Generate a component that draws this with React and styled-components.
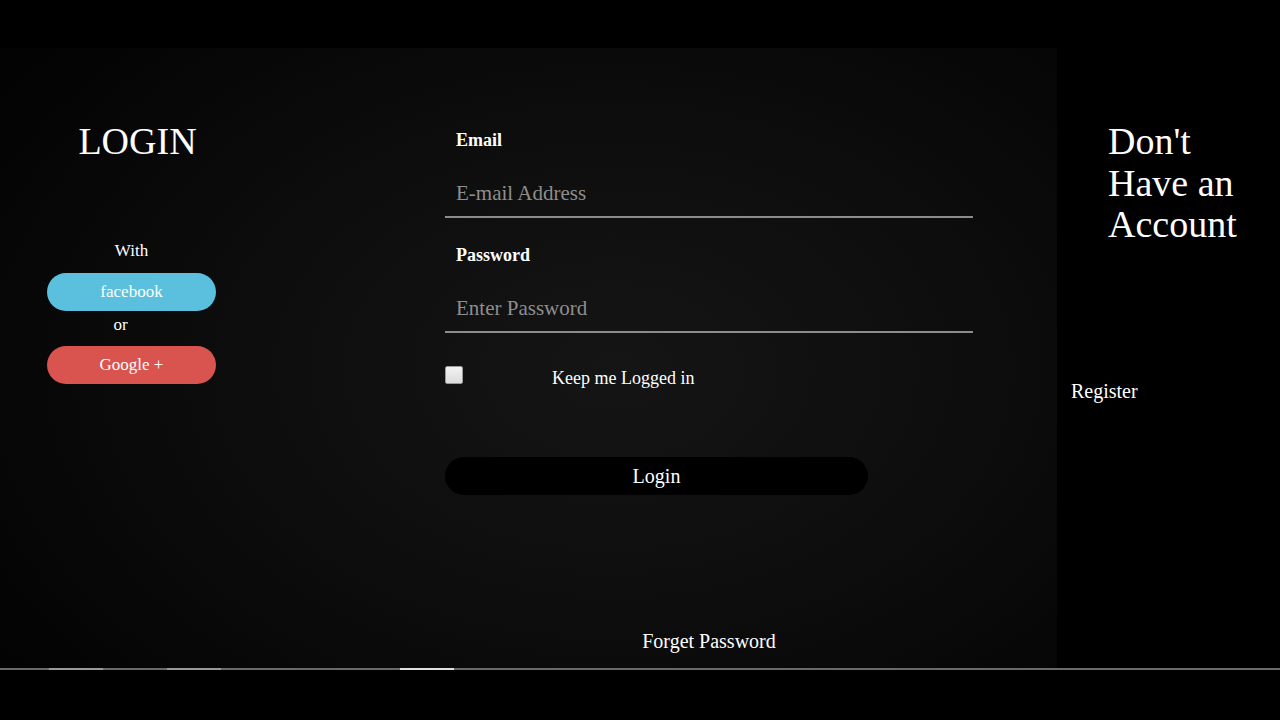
import styled, { createGlobalStyle } from "styled-components"

const GlobalStyle = createGlobalStyle`
  html, body {
    margin: 0;
    padding: 0;
    background: #000;
    font-family: "Liberation Serif", "Times New Roman", serif;
    color: #fff;
  }
  * { box-sizing: border-box; }
`

const Page = styled.div`
  width: 1280px;
  height: 720px;
  background: #000;
  display: flex;
  flex-direction: column;
  overflow: hidden;
`

const Main = styled.div`
  margin-top: 48px;
  height: 620px;
  display: flex;
`

const LoginPanel = styled.div`
  width: 1057px;
  display: flex;
  background: radial-gradient(ellipse 70% 80% at 58% 52%, #151515 0%, #0d0d0d 50%, #060606 85%, #030303 100%);
`

const Sidebar = styled.div`
  width: 263px;
  display: flex;
  flex-direction: column;
  align-items: center;
  padding-top: 72px;
`

const Heading = styled.h1`
  margin: 0 0 0 12px;
  font-weight: normal;
  font-size: 38px;
  line-height: 42px;
`

const SmallText = styled.span`
  font-size: 17px;
  line-height: 20px;
  margin: ${(p) => p.$margin || "0"};
`

const SocialButton = styled.button`
  width: 169px;
  height: 38px;
  border: none;
  border-radius: 19px;
  background: ${(p) => p.$bg};
  color: #fff;
  font-family: inherit;
  font-size: 17px;
  cursor: pointer;
`

const Form = styled.form`
  width: 528px;
  margin-left: 182px;
  display: flex;
  flex-direction: column;
  padding-top: 81px;
`

const Label = styled.label`
  font-weight: bold;
  font-size: 18px;
  line-height: 22px;
  padding-left: 11px;
`

const Input = styled.input`
  width: 528px;
  height: 53px;
  margin: 14px 0 26px;
  padding: 6px 11px 0;
  border: none;
  border-bottom: 2px solid #8c8c8c;
  background: transparent;
  color: #fff;
  font-family: inherit;
  font-size: 21px;
  outline: none;
  &::placeholder {
    color: #8e8e8e;
  }
`

const CheckRow = styled.div`
  display: flex;
  align-items: center;
  margin-top: 1px;
`

const Check = styled.input`
  appearance: none;
  width: 18px;
  height: 18px;
  margin: 0;
  background: linear-gradient(#f2f2f2, #dcdcdc);
  border: 1px solid #9a9a9a;
  border-radius: 2px;
`

const CheckLabel = styled.span`
  font-size: 18px;
  margin-left: 89px;
  margin-top: 8px;
`

const LoginButton = styled.button`
  width: 423px;
  height: 38px;
  margin-top: 68px;
  border: none;
  border-radius: 19px;
  background: #000;
  color: #fff;
  font-family: inherit;
  font-size: 20px;
  cursor: pointer;
`

const ForgetLink = styled.a`
  align-self: center;
  margin-top: 135px;
  font-size: 20px;
  color: #fff;
  text-decoration: none;
`

const RegisterPanel = styled.div`
  flex: 1;
  background: #000;
  display: flex;
  flex-direction: column;
  padding-top: 73px;
`

const RegisterTitle = styled.h2`
  margin: 0 0 0 51px;
  font-weight: normal;
  font-size: 38px;
  line-height: 41.5px;
`

const RegisterLink = styled.a`
  margin: 134px 0 0 14px;
  font-size: 20px;
  color: #fff;
  text-decoration: none;
`

const Track = styled.div`
  height: 2px;
  background: #6a6a6a;
  display: flex;
`

const Marker = styled.div`
  width: 54px;
  height: 2px;
  margin-left: ${(p) => p.$gap}px;
  background: ${(p) => p.$light};
`

export default function App() {
  return (
    <Page>
      <GlobalStyle />
      <Main>
        <LoginPanel>
          <Sidebar>
            <Heading>LOGIN</Heading>
            <SmallText $margin="79px 0 12px">With</SmallText>
            <SocialButton type="button" $bg="#5bc0de">facebook</SocialButton>
            <SmallText $margin="4px 22px 11px 0">or</SmallText>
            <SocialButton type="button" $bg="#d9534f">Google +</SocialButton>
          </Sidebar>
          <Form onSubmit={(e) => e.preventDefault()}>
            <Label>Email</Label>
            <Input type="email" placeholder="E-mail Address" />
            <Label>Password</Label>
            <Input type="password" placeholder="Enter Password" />
            <CheckRow>
              <Check type="checkbox" />
              <CheckLabel>Keep me Logged in</CheckLabel>
            </CheckRow>
            <LoginButton type="submit">Login</LoginButton>
            <ForgetLink href="#">Forget Password</ForgetLink>
          </Form>
        </LoginPanel>
        <RegisterPanel>
          <RegisterTitle>
            Don't
            <br />
            Have an
            <br />
            Account
          </RegisterTitle>
          <RegisterLink href="#">Register</RegisterLink>
        </RegisterPanel>
      </Main>
      <Track>
        <Marker $gap={49} $light="#9a9a9a" />
        <Marker $gap={64} $light="#9a9a9a" />
        <Marker $gap={179} $light="#e0e0e0" />
      </Track>
    </Page>
  )
}
